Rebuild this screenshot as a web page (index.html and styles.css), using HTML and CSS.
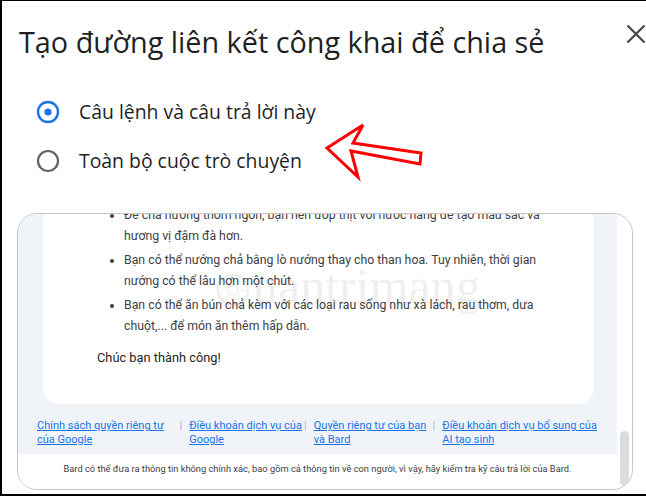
FILE: index.html
```html
<!DOCTYPE html>
<html lang="vi">
<head>
<meta charset="utf-8">
<title>Chia sẻ</title>
<link rel="stylesheet" href="styles.css">
</head>
<body>
<div class="dialog">
  <header class="head">
    <h1 class="title">Tạo đường liên kết công khai để chia sẻ</h1>
    <span class="close">
      <svg width="20" height="20" viewBox="0 0 20 20"><path d="M1.5 1.5 L18.5 18.5 M18.5 1.5 L1.5 18.5" stroke="#444746" stroke-width="2.2" fill="none"/></svg>
    </span>
  </header>

  <div class="options">
    <div class="opt">
      <svg class="radio" width="24" height="24" viewBox="0 0 24 24"><circle cx="12" cy="12" r="10" fill="none" stroke="#1a73e8" stroke-width="2.4"/><circle cx="12" cy="12" r="3.6" fill="#1a73e8"/></svg>
      <span class="opt-label">Câu lệnh và câu trả lời này</span>
    </div>
    <div class="opt">
      <svg class="radio" width="24" height="24" viewBox="0 0 24 24"><circle cx="12" cy="12" r="10" fill="none" stroke="#5f6368" stroke-width="2.2"/></svg>
      <span class="opt-label">Toàn bộ cuộc trò chuyện</span>
    </div>
  </div>

  <div class="card">
    <div class="scroll">
      <div class="light">
        <div class="answer">
          <ul class="list">
            <li>Để chả nướng thơm ngon, bạn nên ướp thịt với nước hàng để tạo màu sắc và hương vị đậm đà hơn.</li>
            <li>Bạn có thể nướng chả bằng lò nướng thay cho than hoa. Tuy nhiên, thời gian nướng có thể lâu hơn một chút.</li>
            <li>Bạn có thể ăn bún chả kèm với các loại rau sống như xà lách, rau thơm, dưa chuột,... để món ăn thêm hấp dẫn.</li>
          </ul>
          <p class="wish">Chúc bạn thành công!</p>
        </div>
        <div class="links">
          <div class="link-item w1"><a class="link" href="#">Chính sách quyền riêng tư của Google</a></div>
          <div class="link-item w2"><span class="sep">|</span><a class="link" href="#">Điều khoản dịch vụ của Google</a></div>
          <div class="link-item w3"><span class="sep">|</span><a class="link" href="#">Quyền riêng tư của bạn và Bard</a></div>
          <div class="link-item w4"><span class="sep">|</span><a class="link" href="#">Điều khoản dịch vụ bổ sung của AI tạo sinh</a></div>
        </div>
      </div>
      <p class="disclaimer">Bard có thể đưa ra thông tin không chính xác, bao gồm cả thông tin về con người, vì vậy, hãy kiểm tra kỹ câu trả lời của Bard.</p>
      <div class="watermark">
        <svg width="36" height="36" viewBox="0 0 36 36"><circle cx="18" cy="18" r="15" fill="none" stroke="#000" stroke-width="2.5"/><circle cx="18" cy="18" r="5" fill="none" stroke="#000" stroke-width="1.5"/><path d="M18 6v4M18 26v4M6 18h4M26 18h4M10 10l3 3M23 23l3 3M26 10l-3 3M10 26l3-3" stroke="#000" stroke-width="1.5"/></svg>
        <span class="wm-text">uantrimang</span>
      </div>
    </div>
    <div class="track"><div class="thumb"></div></div>
  </div>
</div>
<svg class="arrow" width="110" height="66" viewBox="320 118 110 66">
  <polygon points="327,148 363,125 353,143 421,153 420,164 351,151 358,177" fill="#fff" stroke="#ff0000" stroke-width="3" stroke-linejoin="miter"/>
</svg>
</body>
</html>
```

FILE: styles.css
```css
html, body {
  margin: 0;
  padding: 0;
}
body {
  width: 646px;
  height: 496px;
  box-sizing: border-box;
  border-top: 1px solid #000;
  border-left: 2px solid #000;
  border-bottom: 2px solid #000;
  background: #fff;
  overflow: hidden;
  font-family: Roboto, "Noto Sans", Arial, sans-serif;
  color: #1f1f1f;
}
.dialog {
  height: 100%;
}
.head {
  display: flex;
  align-items: flex-start;
  height: 58px;
}
.title {
  margin: 0;
  padding: 25px 0 0 17px;
  font-family: "Open Sans", Roboto, sans-serif;
  font-size: 28.8px;
  line-height: 32px;
  font-weight: 400;
  color: #1f1f1f;
  white-space: nowrap;
}
.close {
  margin-left: auto;
  margin-top: 23px;
  display: flex;
}
.options {
  margin-top: 28px;
  padding-left: 34px;
}
.opt {
  display: flex;
  align-items: center;
  height: 49px;
}
.radio {
  flex: none;
}
.opt-label {
  margin-left: 19px;
  font-family: "Open Sans", Roboto, sans-serif;
  font-size: 19.4px;
  color: #1f1f1f;
}
.card {
  margin: 28px 0 0 15px;
  width: 616px;
  height: 277px;
  box-sizing: border-box;
  border: 1px solid #c4c7c5;
  border-radius: 20px;
  display: flex;
  overflow: hidden;
}
.scroll {
  flex: 1;
  display: flex;
  flex-direction: column;
  justify-content: flex-end;
  overflow: hidden;
  position: relative;
}
.scroll > * {
  flex-shrink: 0;
}
.light {
  background: #f0f4f9;
}
.answer {
  margin: 0 23px 0 25px;
  background: #fff;
  border-radius: 0 0 16px 16px;
  padding: 0 50px 36px 54px;
}
.list {
  margin: 0;
  padding-left: 27px;
  font-size: 12.3px;
  line-height: 21px;
  color: #3c4043;
}
.list li {
  margin-bottom: 3px;
}
.list li:last-child {
  margin-bottom: 0;
}
.wish {
  margin: 10px 0 0 0;
  font-size: 12.8px;
  line-height: 21px;
  color: #1f1f1f;
}
.links {
  display: flex;
  align-items: flex-start;
  padding: 15px 10px 7px 19px;
  font-size: 11px;
  line-height: 14px;
}
.link-item {
  display: flex;
  align-items: flex-start;
}
.link {
  color: #1a73e8;
  text-decoration: underline;
}
.sep {
  color: #b0b3b8;
  margin-right: 7px;
}
.w1 { width: 143px; }
.w1 .link { width: 138px; }
.w2 { width: 125px; }
.w2 .link { width: 114px; }
.w3 { width: 129px; }
.w3 .link { width: 118px; }
.w4 { width: 175px; }
.w4 .link { width: 160px; }
.disclaimer {
  margin: 0;
  height: 35px;
  box-sizing: border-box;
  padding-top: 8px;
  font-size: 9.3px;
  line-height: 14px;
  text-align: center;
  color: #3c4043;
  background: #fff;
}
.watermark {
  position: absolute;
  left: 197px;
  top: 50px;
  display: flex;
  align-items: flex-end;
  opacity: 0.06;
}
.wm-text {
  font-family: "Liberation Serif", serif;
  font-size: 50px;
  line-height: 44px;
  color: #000;
  margin-left: 2px;
}
.track {
  width: 15px;
  display: flex;
  flex-direction: column;
  justify-content: flex-end;
}
.thumb {
  width: 9px;
  height: 55px;
  margin: 0 0 3px 3px;
  border-radius: 5px;
  background: #dadce0;
}
.arrow {
  position: absolute;
  left: 320px;
  top: 118px;
}
```
